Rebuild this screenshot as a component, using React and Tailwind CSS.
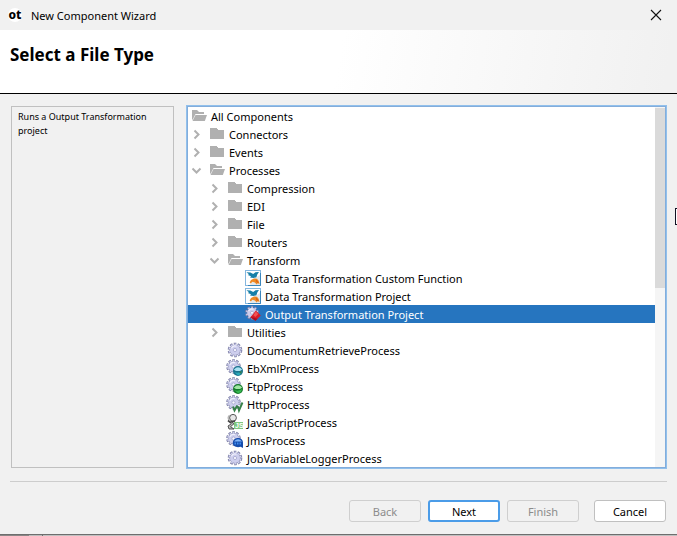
import React, { useState } from "react";

function Folder() {
  return (
    <svg viewBox="0 0 16 16" className="size-4" shapeRendering="crispEdges" aria-hidden="true">
      <path d="M1 2h6l2 2h6v9H1z" fill="#b0b0b0" />
    </svg>
  );
}

function OpenFolder() {
  return (
    <svg viewBox="0 0 16 16" className="size-4" aria-hidden="true">
      <path d="M1 12V2h5l2 2h5v2H4.5L2 11z" fill="#b0b0b0" />
      <path d="M4.5 7H16l-2.2 6H1.5z" fill="#b0b0b0" />
    </svg>
  );
}

function Chevron({ open }) {
  return (
    <svg viewBox="0 0 18 18" className="size-[18px]" fill="none" stroke="#b0b0b0" strokeWidth="2" aria-hidden="true">
      {open ? <path d="M1.5 7.5l4 4 4-4" /> : <path d="M3.5 5.5l4 4-4 4" />}
    </svg>
  );
}

function GearShape({ cx = 8, cy = 8, scale = 1 }) {
  return (
    <g transform={`translate(${cx} ${cy}) scale(${scale})`} fill="none">
      <circle r="6.1" stroke="#7f81a8" strokeWidth="2.4" strokeDasharray="2.5 1.33" />
      <circle r="5.5" fill="#8688b0" />
      <circle r="5.6" stroke="#cfd0ee" strokeWidth="1.6" strokeDasharray="1.5 2.02" strokeDashoffset="-0.5" />
      <circle r="5" fill="#cdceed" />
      <path d="M-3.6 -1.8A4 4 0 0 1 1.5 -3.7" stroke="#f0f0fc" strokeWidth="1.2" />
      <circle r="1.6" fill="#f7f7ff" stroke="#a3a5cc" strokeWidth="0.8" />
    </g>
  );
}

function Gear({ kind }) {
  return (
    <svg viewBox="0 0 16 16" className="size-4 overflow-visible" aria-hidden="true">
      {kind === "gear" ? <GearShape /> : <GearShape cx={6.5} cy={6.5} />}
      {kind === "xml" && (
        <g>
          <circle cx="11" cy="11" r="5" fill="#19728e" />
          <path d="M6.8 9.8Q11 5 15.2 9.6L13 11H9z" fill="#a9e2f2" />
          <path d="M7 12q4 2 8-1l-1 3-3 1.4z" fill="#2ba8b8" />
          <path d="M12 12l3-1-1 3z" fill="#34794b" />
        </g>
      )}
      {kind === "ftp" && (
        <g>
          <circle cx="11" cy="11" r="5" fill="#167b2b" />
          <path d="M6.8 9.8Q11 5 15.2 9.6L13 11H9z" fill="#a1e6a4" />
          <path d="M7 12q4 2 8-1l-1 3-3 1.2z" fill="#36b851" />
        </g>
      )}
      {kind === "http" && (
        <path d="M6 10.5l1.5 4 2.8-5M11 10.5l1 4 3.5-8" fill="none" stroke="#368048" strokeWidth="1.9" />
      )}
      {kind === "jms" && (
        <g>
          <path d="M11 6c3 0 5 2 5 4.7v5.3l-2.4-1.2c-4.2 1.2-7.8-.6-7.8-3.8 0-2.8 2.2-5 5.2-5z" fill="#164dac" />
          <path d="M7 9.5Q11 5.2 15 9.4z" fill="#80b6fa" />
          <path d="M7.5 11.5h7" stroke="#3e8cf0" strokeWidth="2" strokeDasharray="1.5 1" />
        </g>
      )}
    </svg>
  );
}

function ScriptIcon() {
  return (
    <svg viewBox="0 0 16 16" className="size-4 overflow-visible" aria-hidden="true">
      <path d="M2.2 6.5Q0 3 2.6 1.4" fill="none" stroke="#b5b5b5" strokeWidth="1.4" />
      <circle cx="6" cy="3.8" r="3.4" fill="#e7e7e7" stroke="#555" />
      <path d="M1 6.5l2.2 1.8L8 7" fill="none" stroke="#444" strokeWidth="1.7" />
      <path d="M4 7.5l3 2.2-3.5 3L7 15H2L1 12l3-2z" fill="#bbb" stroke="#444" strokeWidth="0.9" />
      <rect x="7" y="8" width="9" height="7" fill="#7fc77f" />
      <text x="8" y="14" fontSize="7" fontWeight="bold" fill="#fff" className="font-['Liberation_Sans',sans-serif]">JS</text>
    </svg>
  );
}

function DataIcon() {
  return (
    <svg viewBox="0 0 16 16" className="size-4" aria-hidden="true">
      <rect x="0.5" y="0.5" width="15" height="15" fill="#fff" stroke="#84b7df" />
      <path d="M15.5 3v12.5H3" fill="none" stroke="#3b86bd" />
      <path d="M8 9l7-4v10H5z" fill="#e4e8ec" />
      <path d="M1.4 2.2l4 .2L8.2 4 10.5 2.2 14 2l-1.6 2.2-1 3L8.6 8 5 7.4 6 6.2 2.8 5l1.2-.8z" fill="#177fa8" />
      <path d="M4.6 12.6L6 10l3-1.6 3 .4 1.6 2 1 3.2-2-.8-.8 1.4-2-2.2-2.4-.6-1.6 1.8z" fill="#ef8a25" />
      <path d="M10.5 9.2l2 1.7 1.3 2-2.2-.6z" fill="#d95f16" />
    </svg>
  );
}

function OutputIcon() {
  return (
    <svg viewBox="0 0 16 16" className="size-4 overflow-visible" aria-hidden="true">
      <GearShape cx={7} cy={6.8} scale={0.95} />
      <path d="M10.8 4.4l5 5-5.3 5.4-5.3-3.6 2.6-2.6z" fill="#d91d2a" />
      <path d="M10.8 5.6l2.4 2.4-2.8 3-2-1.8z" fill="#f25353" />
      <path d="M5.2 11.2l5.3 3.6 2-2.1-4.3-1.3z" fill="#a90f23" />
    </svg>
  );
}

function ItemIcon({ kind }) {
  if (kind === "open") return <OpenFolder />;
  if (kind === "closed") return <Folder />;
  if (kind === "data") return <DataIcon />;
  if (kind === "output") return <OutputIcon />;
  if (kind === "script") return <ScriptIcon />;
  return <Gear kind={kind} />;
}

const INDENT = ["pl-[3px]", "pl-[3px]", "pl-[21px]", "pl-[39px]"];

const ITEMS = [
  { level: 0, icon: "open", label: "All Components" },
  { level: 1, icon: "closed", label: "Connectors" },
  { level: 1, icon: "closed", label: "Events" },
  { level: 1, icon: "open", label: "Processes" },
  { level: 2, icon: "closed", label: "Compression" },
  { level: 2, icon: "closed", label: "EDI" },
  { level: 2, icon: "closed", label: "File" },
  { level: 2, icon: "closed", label: "Routers" },
  { level: 2, icon: "open", label: "Transform" },
  { level: 3, icon: "data", label: "Data Transformation Custom Function" },
  { level: 3, icon: "data", label: "Data Transformation Project" },
  { level: 3, icon: "output", label: "Output Transformation Project" },
  { level: 2, icon: "closed", label: "Utilities" },
  { level: 2, icon: "gear", label: "DocumentumRetrieveProcess" },
  { level: 2, icon: "xml", label: "EbXmlProcess" },
  { level: 2, icon: "ftp", label: "FtpProcess" },
  { level: 2, icon: "http", label: "HttpProcess" },
  { level: 2, icon: "script", label: "JavaScriptProcess" },
  { level: 2, icon: "jms", label: "JmsProcess" },
  { level: 2, icon: "gear", label: "JobVariableLoggerProcess" },
];

function TreeRow({ item, selected, onSelect }) {
  const folder = item.icon === "open" || item.icon === "closed";
  return (
    <li
      role="treeitem"
      aria-level={item.level + 1}
      aria-selected={selected}
      onClick={onSelect}
      className={`flex h-[18px] items-center ${INDENT[item.level]} ${selected ? "bg-[#2675bf] text-white" : "text-black"}`}
    >
      {item.level > 0 && (
        <span className="flex w-[18px] shrink-0">
          {folder && (
            <button type="button" aria-label={`Toggle ${item.label}`}>
              <Chevron open={item.icon === "open"} />
            </button>
          )}
        </span>
      )}
      <span className="mr-1 shrink-0">
        <ItemIcon kind={item.icon} />
      </span>
      <span className="whitespace-nowrap pt-0.5">{item.label}</span>
    </li>
  );
}

const BUTTON = "h-[22px] w-[72px] rounded-[3px] border pt-px text-center leading-5";

export default function App() {
  const [selected, setSelected] = useState("Output Transformation Project");
  return (
    <div className="relative flex min-h-screen flex-col overflow-hidden bg-[#f1f1f1] font-['Noto_Sans','Open_Sans',sans-serif] text-[11px] leading-[18px] text-black">
      <div className="flex h-[30px] items-center pl-2 pr-[15px]">
        <span className="flex size-[14px] items-center justify-center rounded-full bg-white text-[12px] font-extrabold leading-3">
          ot
        </span>
        <span className="ml-[9px] grow pt-0.5">New Component Wizard</span>
        <button type="button" aria-label="Close">
          <svg viewBox="0 0 12 12" className="size-3" stroke="#111" strokeWidth="1.1" aria-hidden="true">
            <path d="M1 1l10 10M11 1L1 11" />
          </svg>
        </button>
      </div>

      <header className="h-16 border-b border-black bg-[linear-gradient(100deg,#ffffff_50%,#f1f1f1_98%)] px-[10px] pt-3">
        <h1 className="text-[17px] font-bold leading-[26px]">Select a File Type</h1>
      </header>

      <main className="flex gap-3 pb-3 pl-[11px] pr-[10px] pt-[11px]">
        <section className="my-px w-[163px] shrink-0 border border-[#c0c0c0] px-[6px] py-[3px] text-[9px] leading-[14px]">
          Runs a Output Transformation project
        </section>
        <div className="flex min-w-0 grow border border-[#91c0ec]">
          <div className="flex min-w-0 grow border border-[#83addb] bg-white">
            <ul role="tree" aria-label="Components" className="min-w-0 grow">
              {ITEMS.map((item) => (
                <TreeRow
                  key={item.label}
                  item={item}
                  selected={selected === item.label}
                  onSelect={() => setSelected(item.label)}
                />
              ))}
            </ul>
            <div className="w-[10px] shrink-0 bg-[#f5f5f5] pt-px">
              <div className="h-1/2 bg-[#dadada]" />
            </div>
          </div>
        </div>
      </main>

      <footer className="mx-[10px] flex justify-end gap-[7px] border-t border-[#cdcdcd] pb-3 pr-px pt-[18px]">
        <button type="button" disabled className={`${BUTTON} border-[#cfcfcf] text-[#8c8c8c]`}>
          Back
        </button>
        <button type="button" className="h-[22px] w-[72px] rounded-[3px] border-2 border-[#4b9ce8] bg-white pt-px text-center leading-[18px]">
          Next
        </button>
        <button type="button" disabled className={`${BUTTON} border-[#cfcfcf] text-[#8c8c8c]`}>
          Finish
        </button>
        <button type="button" className={`${BUTTON} ml-2 border-[#c0c0c0] bg-white`}>
          Cancel
        </button>
      </footer>

      <div className="flex h-[2px] border-t border-[#6e6e6e] bg-[#c0c0c0]">
        <div className="w-[29px] bg-[#8a8686]" />
        <div className="w-[14px] border-r border-[#707070] bg-[#bcbcbc]" />
      </div>

      <div className="absolute right-0 top-[208px] h-[17px] w-[2px] border-y border-l border-[#111122] bg-white" />
    </div>
  );
}
